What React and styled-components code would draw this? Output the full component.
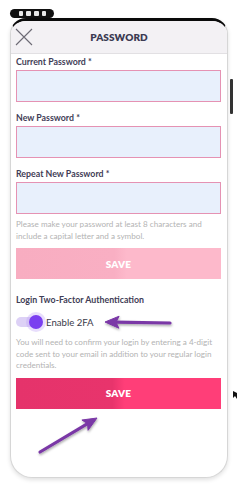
import React, { useState } from 'react';
import styled, { createGlobalStyle } from 'styled-components';

const GlobalStyle = createGlobalStyle`
  html, body {
    margin: 0;
    padding: 0;
    background: #ffffff;
  }
  body {
    font-family: Lato, "Open Sans", sans-serif;
  }
`;

const Page = styled.div`
  position: relative;
  width: 237px;
  height: 500px;
  overflow: hidden;
  padding-top: 18px;
  box-sizing: border-box;
`;

const StatusPill = styled.div`
  position: absolute;
  left: 10px;
  top: 9px;
  width: 44px;
  height: 9px;
  border-radius: 5px;
  background: #111;
  display: flex;
  align-items: center;
  justify-content: center;
  gap: 3px;
`;

const PillDot = styled.span`
  width: ${p => p.w || 5}px;
  height: 5px;
  border-radius: 1px;
  background: #e8e8e8;
`;

const Phone = styled.div`
  position: relative;
  margin-left: 10px;
  width: 218px;
  height: 460px;
  box-sizing: border-box;
  border: 1px solid #d6d6d6;
  border-top: 3px solid #0a0a0a;
  border-radius: 16px 16px 22px 22px;
  background: #fff;
  box-shadow: 0 2px 4px rgba(0, 0, 0, 0.12);
  overflow: hidden;
`;

const SideButton = styled.div`
  position: absolute;
  left: 230px;
  top: 79px;
  width: 3px;
  height: 35px;
  background: #333;
  border-radius: 1px;
`;

const Header = styled.div`
  position: relative;
  height: 32px;
  background: #f3f1f4;
  border-bottom: 1px solid #e2e0e3;
  display: flex;
  align-items: center;
  justify-content: center;
`;

const CloseButton = styled.button`
  position: absolute;
  left: 4px;
  top: 7px;
  width: 18px;
  height: 18px;
  padding: 0;
  border: none;
  background: none;
`;

const Title = styled.h1`
  margin: 0;
  font-size: 10px;
  font-weight: 800;
  letter-spacing: 0.1px;
  color: #3b3a52;
`;

const Form = styled.div`
  padding: 2px 6px 0 5px;
  display: flex;
  flex-direction: column;
`;

const Label = styled.label`
  font-size: 8.8px;
  line-height: 12px;
  font-weight: 700;
  color: #3f3d56;
  margin-bottom: 2px;
`;

const Input = styled.input`
  box-sizing: border-box;
  width: 100%;
  height: 32px;
  margin: 0 0 ${p => p.$mb || 10}px;
  border: 1px solid #e592b3;
  background: #e8f0fc;
  outline: none;
`;

const Hint = styled.p`
  margin: 0;
  font-size: 8.1px;
  line-height: 11.5px;
  color: #b3b3b3;
`;

const SaveButton = styled.button`
  width: 100%;
  height: 31px;
  border: none;
  padding: 0;
  color: #fff;
  font-family: Lato, sans-serif;
  font-size: 10px;
  font-weight: 800;
  letter-spacing: 0.2px;
  background: ${p => p.$active
    ? 'linear-gradient(90deg, #e5336b 0%, #e8346c 47%, #ff3e78 53%, #ff3e78 100%)'
    : 'linear-gradient(90deg, #f8adc1 0%, #f9afc3 48%, #fdb9cb 54%, #fdb9cb 100%)'};
  margin-top: ${p => p.$mt}px;
`;

const SectionTitle = styled.div`
  margin-top: 15px;
  font-size: 8.8px;
  line-height: 12px;
  font-weight: 700;
  color: #3f3d56;
`;

const ToggleRow = styled.div`
  display: flex;
  align-items: center;
  height: 16px;
  margin-top: 8px;
  gap: 6px;
`;

const Track = styled.div`
  position: relative;
  width: 24px;
  height: 10px;
  border-radius: 5px;
  background: #ddd1f6;
`;

const Knob = styled.div`
  position: absolute;
  right: -3px;
  top: -2px;
  width: 14px;
  height: 14px;
  border-radius: 50%;
  background: #7b3ff0;
  box-shadow: 0 0 0 3px rgba(190, 160, 245, 0.35);
`;

const ToggleText = styled.span`
  font-size: 9.6px;
  color: #3b3a4a;
`;

const Desc = styled(Hint)`
  margin-top: 7px;
`;

const Overlay = styled.svg`
  position: absolute;
  left: 0;
  top: 0;
  pointer-events: none;
`;

function Arrow({ x1, y1, x2, y2 }) {
  const ang = Math.atan2(y2 - y1, x2 - x1);
  const len = 14;
  const w = 6;
  const bx = x2 - Math.cos(ang) * len;
  const by = y2 - Math.sin(ang) * len;
  const px = -Math.sin(ang) * w;
  const py = Math.cos(ang) * w;
  const head = `${x2},${y2} ${bx + px},${by + py} ${bx + 3 * Math.cos(ang)},${by + 3 * Math.sin(ang)} ${bx - px},${by - py}`;
  return (
    <g filter="url(#sh)">
      <line x1={x1} y1={y1} x2={bx + 4 * Math.cos(ang)} y2={by + 4 * Math.sin(ang)} stroke="#7a37a6" strokeWidth="3.2" strokeLinecap="round" />
      <polygon points={head} fill="#7a37a6" strokeLinejoin="round" stroke="#7a37a6" strokeWidth="1" />
    </g>
  );
}

export default function App() {
  const [enabled, setEnabled] = useState(true);
  return (
    <Page>
      <GlobalStyle />
      <StatusPill>
        <PillDot w={4} />
        <PillDot w={5} />
        <PillDot w={5} />
        <PillDot w={4} />
      </StatusPill>
      <Phone>
        <Header>
          <CloseButton aria-label="Close">
            <svg width="18" height="18" viewBox="0 0 18 18">
              <path d="M1 1 L17 17 M17 1 L1 17" stroke="#6d6b75" strokeWidth="1.1" fill="none" />
            </svg>
          </CloseButton>
          <Title>PASSWORD</Title>
        </Header>
        <Form>
          <Label>Current Password *</Label>
          <Input type="password" />
          <Label>New Password *</Label>
          <Input type="password" />
          <Label>Repeat New Password *</Label>
          <Input type="password" $mb={5} />
          <Hint>Please make your password at least 8 characters and include a capital letter and a symbol.</Hint>
          <SaveButton $mt={6}>SAVE</SaveButton>
          <SectionTitle>Login Two-Factor Authentication</SectionTitle>
          <ToggleRow onClick={() => setEnabled(!enabled)}>
            <Track>{enabled && <Knob />}</Track>
            <ToggleText>Enable 2FA</ToggleText>
          </ToggleRow>
          <Desc>You will need to confirm your login by entering a 4-digit code sent to your email in addition to your regular login credentials.</Desc>
          <SaveButton $active $mt={6}>SAVE</SaveButton>
        </Form>
      </Phone>
      <SideButton />
      <Overlay width="237" height="500">
        <defs>
          <filter id="sh" x="-20%" y="-50%" width="140%" height="200%">
            <feDropShadow dx="0.5" dy="1.5" stdDeviation="1" floodColor="#000" floodOpacity="0.35" />
          </filter>
        </defs>
        <Arrow x1={170} y1={323} x2={105} y2={322} />
        <Arrow x1={40} y1={452} x2={97} y2={418} />
        <path d="M233 391 L233 398 L235 396 L237 399 L237 393 Z" fill="#111" />
      </Overlay>
    </Page>
  );
}
